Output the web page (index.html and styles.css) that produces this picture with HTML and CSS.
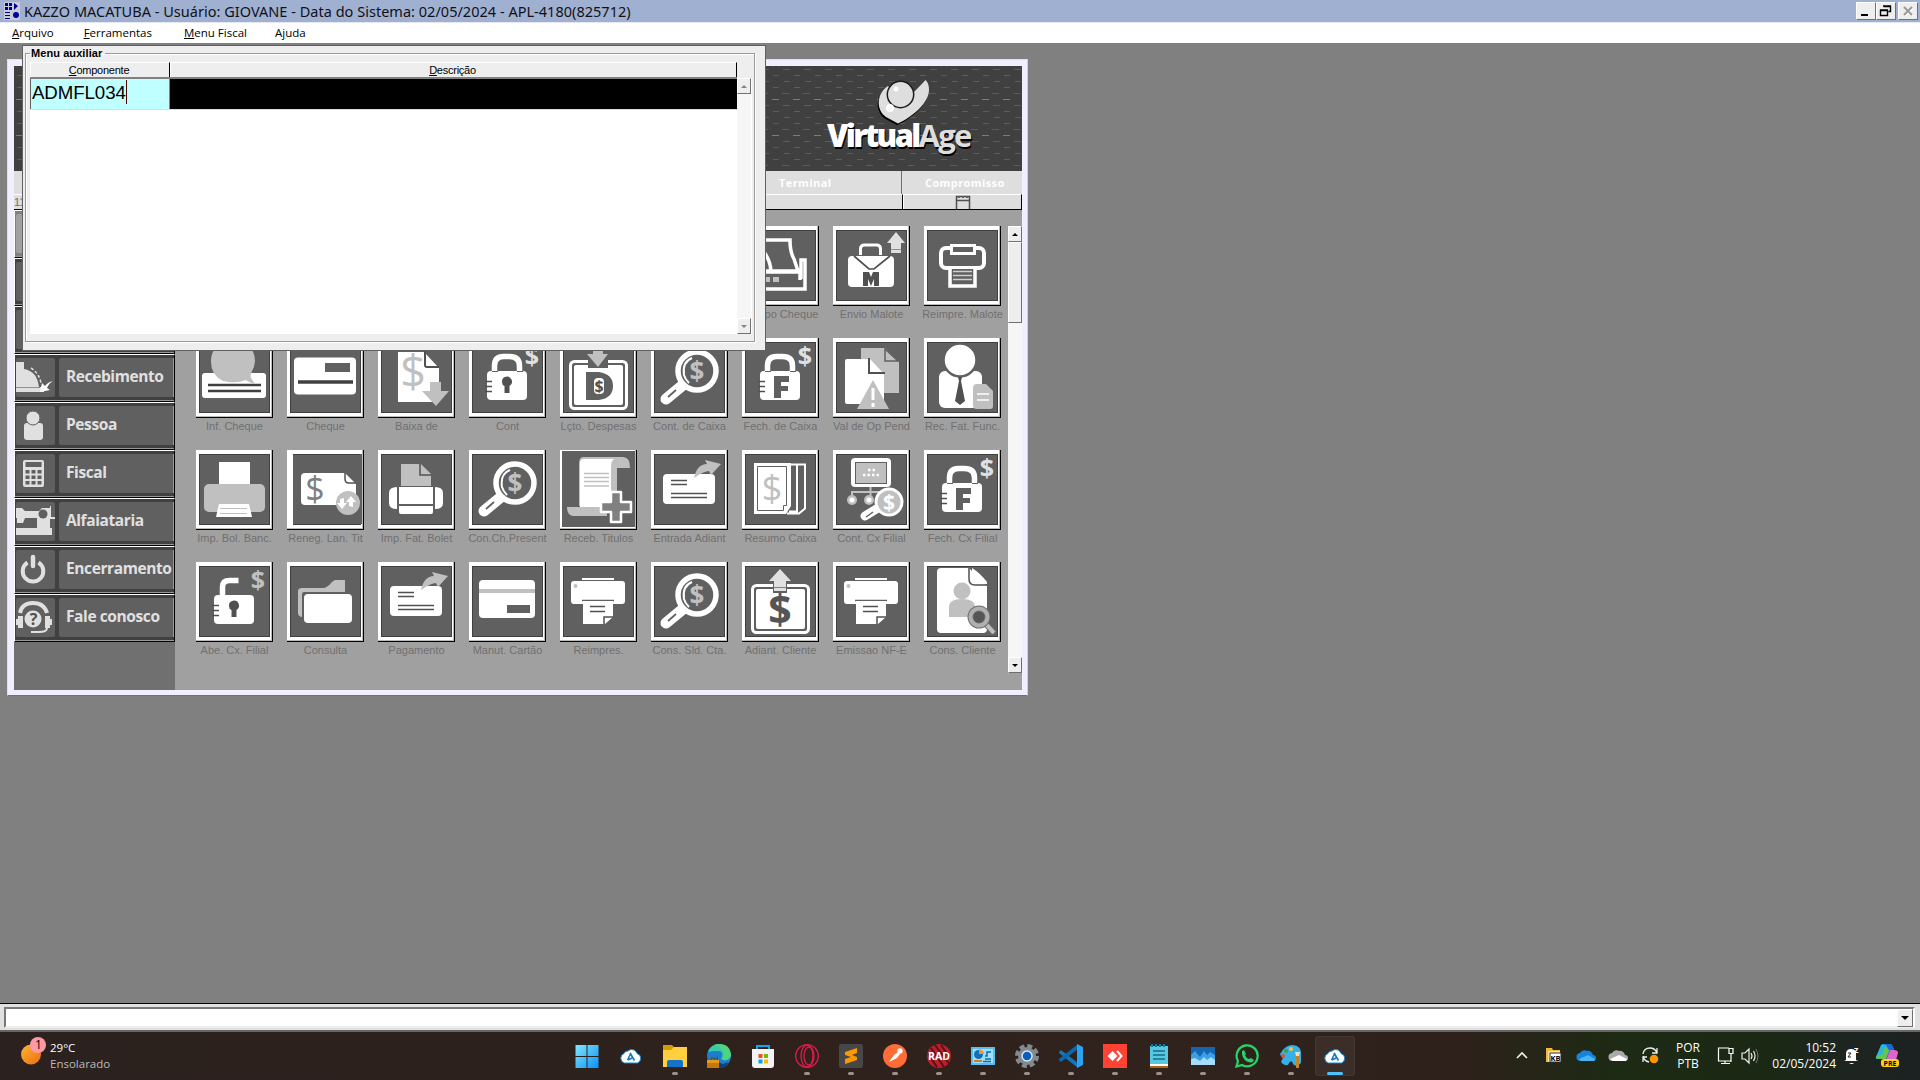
FILE: index.html
```html
<!DOCTYPE html>
<html lang="pt-BR">
<head>
<meta charset="utf-8">
<title>KAZZO MACATUBA</title>
<link rel="stylesheet" href="styles.css">
</head>
<body>
<svg class="defs" width="0" height="0" aria-hidden="true">
<defs>
<pattern id="dashes" width="21" height="36" patternUnits="userSpaceOnUse" x="1" y="3">
<path d="M12 .5h7M2 6.500h6M13 12.500h6M2 18.500h6M11 24.500h7" stroke="#5c5c5c"/><path d="M1 30.500h7" stroke="#7c7c7c"/>
</pattern>
<symbol id="info" viewBox="0 0 77 80"><rect x="6" y="35" width="64" height="25" rx="3" fill="#fff"/><path d="M12 47h53M12 53h53" stroke="#404040" stroke-width="2.500"/><path d="M15 24a22 21 0 1 1 41 9q-2 4-1 7l4 6q-7-2-9-4-10 4-23 1-12-6-12-19z" fill="#c0c0c0"/></symbol>
<symbol id="cheque" viewBox="0 0 77 80"><rect x="7" y="19.500" width="62" height="37" rx="4" fill="#fff"/><rect x="38" y="25" width="25" height="9" fill="#606060"/><path d="M11 44h55" stroke="#404040" stroke-width="3.500"/></symbol>
<symbol id="baixa" viewBox="0 0 77 80"><path d="M20 14h26l15 16v34H20z" fill="#fff"/><path d="M47 13v14q0 2 2 2h12" fill="none" stroke="#505050" stroke-width="2"/><text x="35" y="50" font-size="45" text-anchor="middle" fill="#c0c0c0">$</text><path d="M52 44h11v9h8L58 68 44 53h8z" fill="#c0c0c0"/></symbol>
<symbol id="body" viewBox="0 0 77 80"><rect x="18" y="33" width="40" height="29" rx="4" fill="#fff"/><path d="M16 43.500h7M16 48.500h7M16 53.500h7" stroke="#505050" stroke-width="1.500"/></symbol>
<symbol id="locked" viewBox="0 0 77 80"><use href="#body"/><path d="M25.500 33v-5q0-9.500 9-9.500h6q10 0 10 9.500v5" fill="none" stroke="#fff" stroke-width="5.500"/><path d="M23 33.500h6M48 33.500h6" stroke="#606060"/><text x="63" y="27" font-size="25" font-weight="bold" text-anchor="middle" fill="#e0e0e0">$</text></symbol>
<symbol id="cont" viewBox="0 0 77 80"><use href="#locked"/><path d="M33 44a5 5 0 1 1 7.500 4v7h-5v-7q-2.500-1-2.500-4z" fill="#505050"/></symbol>
<symbol id="fech" viewBox="0 0 77 80"><use href="#locked"/><path d="M32 38h15v6h-8v4h7v5h-7v7h-7z" fill="#606060"/></symbol>
<symbol id="unlock" viewBox="0 0 77 80"><use href="#body"/><path d="M26.500 34V25q0-6.500 7-6.500h9" fill="none" stroke="#fff" stroke-width="5.500"/><path d="M33 44a5 5 0 1 1 7.500 4v7h-5v-7q-2.500-1-2.500-4z" fill="#505050"/><text x="62" y="27" font-size="25" font-weight="bold" text-anchor="middle" fill="#c0c0c0">$</text></symbol>
<symbol id="frame" viewBox="0 0 77 80"><rect x="10.500" y="23.500" width="56" height="47" rx="4" fill="#606060" stroke="#fff" stroke-width="3"/><rect x="14" y="27" width="49" height="40" rx="2" fill="#fff"/></symbol>
<symbol id="desp" viewBox="0 0 77 80"><use href="#frame"/><rect x="28" y="20" width="20" height="10" fill="#606060"/><path d="M33 5h10v11h5L38 29 27 16h6z" fill="#c0c0c0"/><path d="M26 34h13q14 2 14 14T39 62H26z" fill="#606060"/><rect x="34" y="40" width="10" height="16" rx="4" fill="#fff"/><text x="39" y="54" font-size="16" font-weight="bold" text-anchor="middle" fill="#505050">$</text></symbol>
<symbol id="mag" viewBox="0 0 77 80"><path d="M32 47 15 61" stroke="#fff" stroke-width="11" stroke-linecap="round"/><path d="M25 52l-8 7" stroke="#606060" stroke-width="1.700"/><circle cx="46" cy="33" r="19" fill="#606060" stroke="#fff" stroke-width="5.500"/><path d="M41 20q-10 4-8 17 1 4 5 8" fill="none" stroke="#fff" stroke-width="2"/><text x="46" y="42.500" font-size="26" font-weight="bold" text-anchor="middle" fill="#c0c0c0">$</text></symbol>
<symbol id="val" viewBox="0 0 77 80"><path d="M28 10h24l14 14v31H28z" fill="#c0c0c0"/><path d="M52 11v12h13z" fill="#c0c0c0" stroke="#606060" stroke-width="1.500"/><path d="M14 21h23l14 15v30H14q-2 0-2-2V23q0-2 2-2z" fill="#fff"/><path d="M36 20v15h16" fill="none" stroke="#505050" stroke-width="2"/><path d="M40 42l16 29H24z" fill="#c0c0c0"/><path d="M40 50v12M40 65v4" stroke="#fff" stroke-width="3"/></symbol>
<symbol id="func" viewBox="0 0 77 80"><rect x="15" y="33" width="43" height="37" rx="6" fill="#fff"/><circle cx="36" cy="22" r="16.500" fill="#fff" stroke="#606060" stroke-width="2.500"/><path d="M34 39h4l-1 4 4 20-5 4-5-4 4-20z" fill="#505050"/><path d="M49 50q0-4 4-4h9l7 7v15q0 3-3 3H53q-4 0-4-3z" fill="#c0c0c0"/><path d="M53 56h12M53 62h12" stroke="#fff" stroke-width="1.500"/></symbol>
<symbol id="bol" viewBox="0 0 77 80"><rect x="23" y="12" width="31" height="22" fill="#fff"/><rect x="8" y="34" width="61" height="28" rx="5" fill="#c0c0c0"/><path d="M23 54h30l3 13H20z" fill="#fff"/><path d="M24 58.500h27M24 63.500h27" stroke="#c0c0c0"/></symbol>
<symbol id="reneg" viewBox="0 0 77 80"><path d="M3 4h3v71H3z" fill="#fff"/><path d="M73 4h2v70h-2z" fill="#606060"/><path d="M18 23h40l11 11v21H18q-4 0-4-4V27q0-4 4-4z" fill="#fff"/><path d="M58 23v6q0 4 4 4h7" fill="none" stroke="#505050" stroke-width="1.500"/><text x="28" y="51" font-size="34" text-anchor="middle" fill="#808080">$</text><circle cx="61" cy="53" r="12" fill="#c0c0c0"/><path d="M57 48v5h3l-5 6-5-6h3v-4zM66 57v-5h3l-5-6-5 6h3v4z" fill="#fff"/></symbol>
<symbol id="fat" viewBox="0 0 77 80"><path d="M23 14h20l10 10v12H23z" fill="#c0c0c0"/><path d="M42 14v11h11" fill="none" stroke="#505050" stroke-width="1.500"/><rect x="21" y="37" width="34" height="17" fill="#fff"/><path d="M21 56h34v6q0 2-2 2H23q-2 0-2-2zM19 37v22q-8 0-8-6V43q0-6 8-6zM57 37v22q8 0 8-6V43q0-6-8-6z" fill="#fff"/></symbol>
<symbol id="receb" viewBox="0 0 77 80"><path d="M2 1h73v76H2z" fill="#606060"/><path d="M23 7h40q7 0 7 11H57v38H19V14q0-7 4-7zM7 57h40v9H13q-6-1-6-9z" fill="#c0c0c0"/><path d="M20 13q0-4 4-4h30q-3 2-3 8v40H20z" fill="#fff"/><path d="M24 23.500h25M24 27.500h25M24 31.500h25M24 36h25" stroke="#c0c0c0" stroke-width="1.500"/><path d="M51 42h10v10h10v10H61v10H51V62H41V52h10z" fill="#808080" stroke="#fff" stroke-width="2.500" stroke-linejoin="round"/></symbol>
<symbol id="send" viewBox="0 0 77 80"><rect x="12" y="24" width="52" height="30" rx="4" fill="#fff"/><path d="M20 30.500h16M20 34.500h16M20 43.500h36M20 47.500h36" stroke="#505050" stroke-width="1.500"/><path d="M43 28q3-14 13-14l-2-4 16 4-10 11-2-4q-5 0-15 7z" fill="#c0c0c0"/></symbol>
<symbol id="resumo" viewBox="0 0 77 80"><path d="M47 14.500h8v47h-8M55 14.500h8v44l-6 5H45" fill="#606060" stroke="#fff" stroke-width="2"/><path d="M12 13h37v43l-5 8H12z" fill="#fff"/><path d="M15.500 16.500h29v39h-3v5h-26z" fill="none" stroke="#606060"/><text x="30" y="51" font-size="36" text-anchor="middle" fill="#c0c0c0">$</text></symbol>
<symbol id="filial" viewBox="0 0 77 80"><rect x="18" y="8" width="40" height="29" rx="4" fill="#fff"/><rect x="22.500" y="12.500" width="31" height="21" fill="#c0c0c0" stroke="#606060"/><path d="M35 20h8M30 25h17" stroke="#fff" stroke-width="2.500" stroke-dasharray="2.500 2"/><path d="M37.500 37v9M19 47v-5h36" fill="none" stroke="#c0c0c0" stroke-width="2"/><circle cx="19" cy="50" r="5" fill="#c0c0c0"/><circle cx="36" cy="50" r="5" fill="#c0c0c0"/><circle cx="19" cy="50" r="2.500" fill="#fff"/><circle cx="36" cy="50" r="2.500" fill="#fff"/><path d="M45 58L32 66" stroke="#fff" stroke-width="9" stroke-linecap="round"/><path d="M40 62l-7 5" stroke="#606060" stroke-width="1.500"/><circle cx="56" cy="52" r="13" fill="#c0c0c0" stroke="#fff" stroke-width="3"/><text x="56" y="60" font-size="21" font-weight="bold" text-anchor="middle" fill="#fff">$</text></symbol>
<symbol id="folder" viewBox="0 0 77 80"><path d="M11 29q0-3 4-3h21q4 0 9-6l3-2h10v12H17q-2 0-2 3v22q-4-1-4-4z" fill="#c0c0c0"/><rect x="17" y="32" width="48" height="29" rx="4" fill="#fff"/></symbol>
<symbol id="cartao" viewBox="0 0 77 80"><rect x="10" y="18" width="56" height="38" rx="4" fill="#fff"/><path d="M10 27h56v4H10z" fill="#c0c0c0"/><path d="M38 43h23v8H38z" fill="#606060"/></symbol>
<symbol id="print" viewBox="0 0 77 80"><path d="M22 16h32v2H22z" fill="#fff"/><rect x="11" y="19" width="54" height="23" rx="3" fill="#fff"/><circle cx="15.500" cy="24" r="2" fill="#c0c0c0"/><path d="M22 38.500h32" stroke="#606060" stroke-width="1.500"/><path d="M23 39h30v16l-8 7H23z" fill="#fff"/><path d="M44 62v-7h9" fill="none" stroke="#505050" stroke-width="1.500"/><path d="M30 44.500h15M30 49.500h15" stroke="#505050" stroke-width="1.500"/></symbol>
<symbol id="adiant" viewBox="0 0 77 80"><use href="#frame"/><path d="M31 20h14v11H31z" fill="#606060"/><path d="M38 7l11 12h-5v10H32V19h-5z" fill="#e0e0e0"/><path d="M32 25.500h12" stroke="#808080"/><text x="38" y="62" font-size="41" font-weight="bold" text-anchor="middle" fill="#555">$</text></symbol>
<symbol id="cliente" viewBox="0 0 77 80"><path d="M17 6h28l18 18v43q0 4-4 4H17q-4 0-4-4V10q0-4 4-4z" fill="#fff"/><path d="M45 6v11q0 6 6 6h12" fill="none" stroke="#505050" stroke-width="1.500"/><path d="M48 6q8 5 15 14v2H52q-4 0-4-5z" fill="#fff"/><circle cx="38" cy="29" r="8.500" fill="#c0c0c0"/><path d="M25 55V45q0-8 13-8t13 8v10z" fill="#c0c0c0"/><path d="M61 61l9 10" stroke="#707070" stroke-width="6"/><path d="M61 61l9 10" stroke="#c0c0c0" stroke-width="4"/><circle cx="55" cy="55" r="8.500" fill="#555" stroke="#707070" stroke-width="6"/><circle cx="55" cy="55" r="8.500" fill="none" stroke="#b0b0b0" stroke-width="4"/></symbol>
<symbol id="tipo" viewBox="0 0 77 80"><path d="M20 14h28q0 12 4 19l4 12H20M29 45q-1-12-8-20M20 46h38v8M20 63h43V34h-4v19" fill="none" stroke="#fff" stroke-width="3.500"/><path d="M24 51h4v5h-4zM31 51h6v5h-6z" fill="#c0c0c0"/></symbol>
<symbol id="malote" viewBox="0 0 77 80"><rect x="15" y="30" width="46" height="31" rx="4" fill="#fff"/><path d="M27.500 29v-6q0-4 4-4h12q4 0 4 4v6" fill="none" stroke="#fff" stroke-width="3"/><path d="M21 30l15 13h5l16-13" fill="none" stroke="#505050" stroke-width="1.700"/><path d="M30 46h6l2 5 2-5h6v14h-5v-7l-3 7-3-7v7h-5z" fill="#505050"/><path d="M63 6l9 11h-4v10H58V17h-4z" fill="#e0e0e0"/><path d="M58 23.500h10" stroke="#909090"/></symbol>
<symbol id="reimp" viewBox="0 0 77 80"><rect x="17" y="22" width="43" height="20" rx="5" fill="none" stroke="#fff" stroke-width="4"/><rect x="27.500" y="19.500" width="23" height="8" fill="#606060" stroke="#fff" stroke-width="3"/><path d="M26 43v17h25V43" fill="#606060" stroke="#fff" stroke-width="3.500"/><path d="M29 45.500h19M29 49.500h19M29 53.500h19" stroke="#d0d0d0" stroke-width="1.300"/></symbol>
<symbol id="cloud" viewBox="0 0 24 24"><path d="M5.500 19a5 5 0 0 1-.5-9.500 4 4 0 0 1 4-2.500 5.500 5.500 0 0 1 9 2.500 5 5 0 0 1 .5 9.500z" fill="#fff" stroke="#1485c8" stroke-width="1"/><path d="M12 9l-3.500 7M11 9l4.500 7.500M9 16l4-2" fill="none" stroke="#1277bd" stroke-width="1.600"/></symbol>
</defs>
</svg>

<header class="titlebar">
<svg class="appicon" width="16" height="18" viewBox="0 0 16 18"><path d="M0 0h16v18H0z" fill="#c7cbd8"/><path d="M1 1h3v3H1zM5 1h3v3H5zM1 5h3v3H1zM5 5h3v3H5zM10 1l4 3-4 4zM1 10h5v1H1zM1 13h5v1H1zM1 16h5v1H1z" fill="#000098"/><circle cx="12" cy="13" r="3" fill="#000098"/></svg>
<h1>KAZZO MACATUBA - Usuário: GIOVANE - Data do Sistema: 02/05/2024 - APL-4180(825712)</h1>
<div class="winbtns">
<button><svg width="19" height="16"><path d="M4 11h7v2H4z"/></svg></button><button><svg width="19" height="16"><path d="M6.500 3.500h7v5h-2M6 3h8M3.500 7.500h7v5h-7zM3 7h8" fill="none" stroke="#000" stroke-width="1.400"/></svg></button><button class="close"><svg width="19" height="16"><path d="M6 5l8 8M14 5l-8 8" stroke="#fff" stroke-width="2"/><path d="M5 4l8 8M13 4l-8 8" stroke="#999" stroke-width="2"/></svg></button>
</div>
</header>
<nav class="menubar"><a><u>A</u>rquivo</a><a><u>F</u>erramentas</a><a><u>M</u>enu Fiscal</a><a>A<u>j</u>uda</a></nav>

<main class="workspace">
<section class="child">
<div class="banner"><svg width="1008" height="105"><path d="M0 0h1008v105H0z" fill="#404040"/><path d="M0 0h1008v105H0z" fill="url(#dashes)"/>
<path d="M874 20C862 28 862 44 872 51L884 57.500C900 50 915 36 915 24Q915 17 911.500 14Q906 20 900 26L886 34Z" fill="#000" transform="translate(-1 1.800)"/>
<path d="M874 20C862 28 862 44 872 51L884 57.500C900 50 915 36 915 24Q915 17 911.500 14Q906 20 900 26L886 34Z" fill="#dedede"/><circle cx="886.500" cy="28.500" r="13.200" fill="#dedede" stroke="#1c1c1c" stroke-width="1.500"/><circle cx="882" cy="23" r="2.500" fill="#fff"/><circle cx="876" cy="42" r="4" fill="#fff"/></svg>
<div class="brand"><b>Virtual</b><i>Age</i></div></div>
<div class="heads"><span class="term">Terminal</span><span class="comp">Compromisso</span></div>
<div class="subheads"><span class="term">11</span><span class="comp"><svg width="16" height="14"><path d="M1.500 14V1.500h13V14M1 5.500h14" fill="none" stroke="#505050" stroke-width="1.500"/><path d="M3 1h2v2H3zM7 1h2v2H7zM11 1h2v2h-2z" fill="#606060"/></svg></span></div>
<div class="mainarea">
<aside class="side">
<div class="item active"><span class="ico"></span><span class="lbl"></span></div>
<div class="item"><span class="ico"></span><span class="lbl"></span></div>
<div class="item"><span class="ico"></span><span class="lbl"></span></div>
<div class="item"><span class="ico"><svg width="39" height="38"><path d="M0 4h8v7q13 2 15 18h5v5H0z" fill="#e0e0e0"/><path d="M0 29.500h24" stroke="#909090"/><path d="M15 10q8 5 10 15" fill="none" stroke="#e0e0e0" stroke-width="1.500" stroke-dasharray="3 2"/><path d="M24 34l2-9 3 3q3-4 8-5-4 2-6 7l3 2z" fill="#fff"/></svg></span><span class="lbl">Recebimento</span></div>
<div class="item"><span class="ico"><svg width="39" height="38"><rect x="8" y="17" width="19" height="17" rx="3" fill="#e0e0e0"/><circle cx="17" cy="12" r="7" fill="#e0e0e0" stroke="#606060"/></svg></span><span class="lbl">Pessoa</span></div>
<div class="item"><span class="ico"><svg width="39" height="38"><rect x="7" y="6" width="21" height="27" rx="2" fill="#e0e0e0"/><path d="M9.500 8h16v5h-16zM9.500 16h4v3.500h-4zM15.500 16h4v3.500h-4zM21.500 16h4v3.500h-4zM9.500 21.500h4V25h-4zM15.500 21.500h4V25h-4zM21.500 21.500h4V25h-4zM9.500 27h4v3.500h-4zM15.500 27h4v3.500h-4zM21.500 27h4v3.500h-4z" fill="#606060"/></svg></span><span class="lbl">Fiscal</span></div>
<div class="item"><span class="ico"><svg width="39" height="38"><path d="M0 6h6l3 3h14l3-3h8V4h1v11h4v2h-5v9H21V16H9l-2 5H1v-5H0zM0 26h36v7H0z" fill="#e0e0e0"/><circle cx="27" cy="12" r="4.500" fill="#606060"/></svg></span><span class="lbl">Alfaiataria</span></div>
<div class="item"><span class="ico"><svg width="39" height="38"><path d="M11.500 12.500a10.300 10.300 0 1 0 11 0" fill="none" stroke="#e0e0e0" stroke-width="4"/><path d="M17 7v9" stroke="#e0e0e0" stroke-width="4.500" stroke-linecap="round"/></svg></span><span class="lbl">Encerramento</span></div>
<div class="item"><span class="ico"><svg width="39" height="38"><path d="M4 15q2-10 13-10t14 10" fill="none" stroke="#e0e0e0" stroke-width="4"/><circle cx="17" cy="21" r="8.500" fill="#e0e0e0"/><path d="M2 18h5v12H2zM29 18h5v12h-5zM0 21h3v6H0zM33 21h3v6h-3z" fill="#e0e0e0"/><path d="M31 30q0 4-8 4h-8" fill="none" stroke="#e0e0e0" stroke-width="2"/><text x="17.500" y="27" font-size="16" font-weight="bold" text-anchor="middle" fill="#505050">?</text></svg></span><span class="lbl">Fale conosco</span></div>
</aside>
<div class="tiles">
<figure class="first"><svg><use href="#tipo"/></svg><figcaption class="cut">po Cheque</figcaption></figure>
<figure><svg><use href="#malote"/></svg><figcaption>Envio Malote</figcaption></figure>
<figure><svg><use href="#reimp"/></svg><figcaption>Reimpre. Malote</figcaption></figure>
<figure><svg><use href="#info"/></svg><figcaption>Inf. Cheque</figcaption></figure>
<figure><svg><use href="#cheque"/></svg><figcaption>Cheque</figcaption></figure>
<figure><svg><use href="#baixa"/></svg><figcaption>Baixa de</figcaption></figure>
<figure><svg><use href="#cont"/></svg><figcaption>Cont</figcaption></figure>
<figure><svg><use href="#desp"/></svg><figcaption>Lçto. Despesas</figcaption></figure>
<figure><svg><use href="#mag"/></svg><figcaption>Cont. de Caixa</figcaption></figure>
<figure><svg><use href="#fech"/></svg><figcaption>Fech. de Caixa</figcaption></figure>
<figure><svg><use href="#val"/></svg><figcaption>Val de Op Pend</figcaption></figure>
<figure><svg><use href="#func"/></svg><figcaption>Rec. Fat. Func.</figcaption></figure>
<figure><svg><use href="#bol"/></svg><figcaption>Imp. Bol. Banc.</figcaption></figure>
<figure><svg><use href="#reneg"/></svg><figcaption>Reneg. Lan. Tit</figcaption></figure>
<figure><svg><use href="#fat"/></svg><figcaption>Imp. Fat. Bolet</figcaption></figure>
<figure><svg><use href="#mag"/></svg><figcaption>Con.Ch.Present</figcaption></figure>
<figure><svg><use href="#receb"/></svg><figcaption>Receb. Titulos</figcaption></figure>
<figure><svg><use href="#send"/></svg><figcaption>Entrada Adiant</figcaption></figure>
<figure><svg><use href="#resumo"/></svg><figcaption>Resumo Caixa</figcaption></figure>
<figure><svg><use href="#filial"/></svg><figcaption>Cont. Cx Filial</figcaption></figure>
<figure><svg><use href="#fech"/></svg><figcaption>Fech. Cx Filial</figcaption></figure>
<figure><svg><use href="#unlock"/></svg><figcaption>Abe. Cx. Filial</figcaption></figure>
<figure><svg><use href="#folder"/></svg><figcaption>Consulta</figcaption></figure>
<figure><svg><use href="#send"/></svg><figcaption>Pagamento</figcaption></figure>
<figure><svg><use href="#cartao"/></svg><figcaption>Manut. Cartão</figcaption></figure>
<figure><svg><use href="#print"/></svg><figcaption>Reimpres.</figcaption></figure>
<figure><svg><use href="#mag"/></svg><figcaption>Cons. Sld. Cta.</figcaption></figure>
<figure><svg><use href="#adiant"/></svg><figcaption>Adiant. Cliente</figcaption></figure>
<figure><svg><use href="#print"/></svg><figcaption>Emissao NF-E</figcaption></figure>
<figure><svg><use href="#cliente"/></svg><figcaption>Cons. Cliente</figcaption></figure>
</div>
<div class="scroll big"><span class="sb up"></span><span class="thumb"></span><span class="sb down"></span></div>
</div>
</section>

<section class="dialog">
<fieldset><legend>Menu auxiliar</legend>
<div class="table">
<div class="cols"><span class="c1"><u>C</u>omponente</span><span class="c2"><u>D</u>escrição</span></div>
<div class="grid"><div class="rows"><div class="row"><span class="cell">ADMFL034</span><span class="rest"></span></div></div>
<div class="scroll"><span class="sb up"></span><span class="sb down"></span></div></div>
</div>
</fieldset>
</section>
</main>

<div class="command"><div class="field"><span class="sb down"></span></div></div>

<footer class="taskbar">
<div class="weather"><svg width="28" height="30"><defs><linearGradient id="sun" x2="1" y2="1"><stop stop-color="#f8b83a"/><stop offset="1" stop-color="#f06a08"/></linearGradient></defs><circle cx="11" cy="18.500" r="10" fill="url(#sun)"/><circle cx="18" cy="9" r="8" fill="#ff99a4"/><text x="18.500" y="13" font-size="12" text-anchor="middle">1</text></svg><p>29°C<br><span>Ensolarado</span></p></div>
<div class="apps">
<span><svg viewBox="0 0 24 24"><defs><linearGradient id="win" x2="1" y2="1"><stop stop-color="#7fe8ff"/><stop offset="1" stop-color="#0d8ff5"/></linearGradient></defs><path d="M.5 1h11v11H.500zM12.500 1h11v11h-11zM.5 13h11v11H.500zM12.500 13h11v11h-11z" fill="url(#win)"/></svg></span>
<span><svg viewBox="0 0 24 24"><use href="#cloud"/></svg></span>
<span class="run"><svg viewBox="0 0 24 24"><path d="M0 1h9l2 2v5H0z" fill="#d69a05"/><path d="M0 6h8l3-3h13v20H0z" fill="#ffcf3f"/><path d="M4 23v-5q0-2 2-2h12q2 0 2 2v5z" fill="#1273c9"/></svg></span>
<span><svg viewBox="0 0 24 24"><circle cx="12" cy="12" r="12" fill="#1b7fd0"/><path d="M1 8Q4 0 12 0q11 0 12 11-1 6-8 5-3-1-1-3 2-7-5-6-6 0-9 1z" fill="#3bc9a8"/><path d="M12 0q11 0 12 11-1 6-8 5l1-4Q18 4 7 1z" fill="#5fd866" opacity=".6"/><path d="M10 11q-2 7 6 9l6-2q-4 6-10 6z" fill="#123f75"/><path d="M0 16h12v8H0z" fill="#c77708"/><path d="M0 16h12v3H0z" fill="#e39720"/><path d="M4 16v-2h4v2" stroke="#754000" fill="none"/></svg></span>
<span><svg viewBox="0 0 24 24"><path d="M6 6V2h12v4" fill="none" stroke="#1aa3e8" stroke-width="2"/><path d="M1 5h22v16q0 3-3 3H4q-3 0-3-3z" fill="#f3f3f3"/><path d="M7.500 10h4v4h-4z" fill="#f05022"/><path d="M13 10h4v4h-4z" fill="#7db900"/><path d="M7.500 15.500h4v4h-4z" fill="#00a1ee"/><path d="M13 15.500h4v4h-4z" fill="#fdb800"/></svg></span>
<span class="run"><svg viewBox="0 0 24 24"><g fill="none" stroke="#e01b4c" stroke-width="1.300"><circle cx="12" cy="12" r="11.300"/><ellipse cx="12" cy="12" rx="6" ry="11"/><ellipse cx="14" cy="12" rx="5" ry="9"/></g></svg></span>
<span class="run"><svg viewBox="0 0 24 24"><rect width="24" height="24" rx="2" fill="#474747"/><path d="M6 8l12-4v5l-5 2 5 2v3L6 20v-5l6-2-6-2z" fill="#ff9800"/></svg></span>
<span class="run"><svg viewBox="0 0 24 24"><circle cx="12" cy="12" r="12" fill="#ff6c37"/><path d="M6 18l5-7 4-3 2 2-3 4z" fill="#fff"/><circle cx="17" cy="7" r="2.700" fill="#fff"/></svg></span>
<span class="run"><svg viewBox="0 0 24 24"><circle cx="12" cy="12" r="12" fill="#b8202b"/><path d="M4 4l13 19M8 1l15 20M14 1l9 13M1 10l9 13" stroke="#5b1015" stroke-width="2"/><text x="12" y="16" text-anchor="middle" font-size="10.500" font-weight="bold" fill="#fff">RAD</text></svg></span>
<span class="run"><svg viewBox="0 0 24 24"><path d="M0 3h24v18H0z" fill="#58bdf0"/><path d="M2 5h20v14H2z" fill="#9fe0fa"/><circle cx="7.500" cy="10.500" r="4.500" fill="#136fb8"/><path d="M8 10V5q5 1 5 5z" fill="#f5942a"/><path d="M3 17h8" stroke="#d87b18" stroke-width="2"/><path d="M14 12h2V8h4M14 15h6M12 17.500h8" fill="none" stroke="#116aad" stroke-width="1.500"/></svg></span>
<span class="run"><svg viewBox="0 0 24 24"><circle cx="12" cy="12" r="9" fill="#818991"/><circle cx="12" cy="12" r="10" fill="none" stroke="#818991" stroke-width="4" stroke-dasharray="5 2.850"/><circle cx="12" cy="12" r="5" fill="#0d5eb8" stroke="#d7e7f5" stroke-width="1.500"/></svg></span>
<span class="run"><svg viewBox="0 0 24 24"><path d="M0 8l2-2 17 13v5L0 9z" fill="#1177bd"/><path d="M0 16l2 2L19 5V0L0 15z" fill="#0b68ab"/><path d="M18 0l6 3v18l-6 3z" fill="#2ba3f1"/></svg></span>
<span class="run"><svg viewBox="0 0 24 24"><path d="M0 0h24v24H0z" fill="#ff4234"/><path d="M9.500 7l5 5-5 5-5-5z" fill="#fff"/><path d="M14 7l4.500 5-4.500 5" fill="none" stroke="#fff" stroke-width="2"/></svg></span>
<span class="run"><svg viewBox="0 0 24 24"><path d="M3 2h18v19H3z" fill="#58c8e0"/><path d="M3 20h18v2H3z" fill="#fff"/><path d="M3 22h18v2H3z" fill="#b06314"/><path d="M6 7h12M6 11h12M6 15h12" stroke="#14698a" stroke-width="1.500"/><path d="M5 0v3M9 0v3M13 0v3M17 0v3" stroke="#127aa0" stroke-width="2"/></svg></span>
<span class="run"><svg viewBox="0 0 24 24"><path d="M0 3h24v18H0z" fill="#1565b0"/><path d="M0 11l4-4 5 6 4-6 3 4 3-3 5 3v10H0z" fill="#39a0e8"/><path d="M0 15l4-1 5 3 4-4 3 3 4-3 4 3v5H0z" fill="#a8dcfa"/></svg></span>
<span class="run"><svg viewBox="0 0 24 24"><path d="M1.500 22.500L3 17a10.500 10.500 0 1 1 4 4z" fill="none" stroke="#25d366" stroke-width="2.300"/><path d="M7 7l2-1 2 4-1 1q1 3 4 4l2-1 3 2q-1 3-4 2.500Q8 17 7 10z" fill="#25d366"/></svg></span>
<span class="run"><svg viewBox="0 0 24 24"><path d="M2 9Q6 1 14 1q9 1 8 10v8q-5 5-8 1-1-5-4-1-1 4-6 1-3-2-1-4 2-4 0-4-3 0-1-4z" fill="#35b1e9"/><circle cx="7" cy="7" r="2" fill="#3ba233"/><circle cx="12" cy="5" r="2" fill="#f7c530"/><circle cx="4" cy="12" r="2" fill="#e1502a"/><path d="M16 8h5l-1 4v12h-3V12z" fill="#c78325"/><path d="M16 8h5l-1 4h-3z" fill="#f1dfb6"/></svg></span>
<span class="run current"><svg viewBox="0 0 24 24"><use href="#cloud"/></svg></span>
</div>
<div class="tray">
<svg class="strip" width="150" height="32"><path d="M1 18l5-5 5 5" fill="none" stroke="#eee" stroke-width="1.700"/>
<path d="M30 8h6l1 2h7v12H30z" fill="#f0b83c"/><path d="M32 11h12v11H32z" fill="#fbe19a"/><path d="M34 13h11v9H34z" fill="#fff" stroke="#333"/><text x="39.500" y="20.500" font-size="7.500" font-weight="bold" text-anchor="middle">KB</text>
<path d="M65 21a4 4 0 0 1-1-8 5 5 0 0 1 7-2 5 5 0 0 1 6 4 3 3 0 0 1 0 6z" fill="#1583dc"/><path d="M63 19l9-4 7 4-1 2H65z" fill="#49b4f5"/>
<path d="M97 21a4 4 0 0 1-1-8 5 5 0 0 1 7-2 5 5 0 0 1 6 4 3 3 0 0 1 0 6z" fill="#aaa"/><path d="M94 19l9-4 8 4-1 2H97z" fill="#fff"/>
<path d="M127 14q1-6 7-6 5 0 7 5M141 8v5h-5M133 22q-5-1-6-6M127 22v-5h4" fill="none" stroke="#eee" stroke-width="1.300"/><circle cx="138" cy="19" r="4.300" fill="#ff9500"/></svg>
<div class="lang">POR<br>PTB</div>
<svg class="net" width="42" height="32"><path d="M12 8H1.500v13H14v-8M4 23.500h9M8 21v2M12 8.500h4v5h-4zM14 13v9" fill="none" stroke="#fff" stroke-width="1.200"/><path d="M25 13h3l4-4v14l-4-4h-3zM34 13q2 3 0 6M36.500 11q3 5 0 10" fill="none" stroke="#eee" stroke-width="1.200"/><path d="M39 9q4 7 0 14" fill="none" stroke="#777"/></svg>
<div class="clock">10:52<br>02/05/2024</div>
<svg class="bell" width="16" height="32"><path d="M2 20V14q0-5 5-5 5 0 5 5v6l2 1H0z" fill="#fff"/><path d="M5 23h5q-2 2-5 0" fill="#fff"/><path d="M4 13h3l-3 4h3" stroke="#222" fill="none"/><text x="10" y="13" font-size="9" font-weight="bold" fill="#fff">z</text></svg>
<svg class="copilot" width="26" height="32"><path d="M2 17L7 5q1-1 3-1h6q2 0 3 3l1 3h-4L12 19H4q-3 0-2-2z" fill="#29b8d8"/><path d="M2 16q3-1 6-1l3-8 4 3-3 9H5q-3 0-3-3z" fill="#67c34d"/><path d="M8 4h8q2 0 3 3l1 3h-5L12 5z" fill="#1769d8"/><path d="M16 10h4q4 0 4 3l-2 7H12z" fill="#df66c8"/><rect x="7" y="19" width="18" height="8" rx="3" fill="#ffd11b"/><text x="16" y="25.500" font-size="7" font-weight="bold" text-anchor="middle">PRE</text></svg>
</div>
</footer>
</body>
</html>
```
FILE: styles.css
```css
* { box-sizing: border-box; }
body { margin: 0; width: 1920px; height: 1080px; overflow: hidden; display: flex; flex-direction: column; background: #808080; font-family: "Liberation Sans", Arial, sans-serif; }
.defs { position: absolute; }
svg text { font-family: "Open Sans", sans-serif; }

.titlebar { height: 22px; background: #a0b0d0; display: flex; align-items: center; padding-left: 4px; flex: none; }
.titlebar h1 { margin: 0 0 0 4px; font: 400 14.500px/22px "Noto Sans", sans-serif; color: #101018; white-space: nowrap; letter-spacing: .02px; }
.winbtns { margin-left: auto; display: flex; padding: 0 2px 0 0; }
.winbtns button { width: 20px; height: 18px; padding: 0; background: #eee; border: 1px solid; border-color: #fff #707070 #707070 #fff; display: flex; }
.winbtns .close { margin-left: 2px; }
.menubar { height: 21px; flex: none; background: #fff; border-top: 1px solid #e8e8f0; display: flex; padding-left: 12px; font: 11.500px/20px "Open Sans", sans-serif; color: #000; }
.menubar a { margin-right: 30px; white-space: nowrap; }
.menubar a:nth-child(2) { margin-right: 32px; }
.menubar a:nth-child(3) { margin-right: 28px; }
u { text-underline-offset: 1px; }
.workspace { flex: 1; position: relative; }

.child { position: absolute; left: 7px; top: 16px; width: 1021px; height: 637px; background: #f0eeff; border: 1px solid; border-color: #e0e0e0 #d0d0d0 #707070 #e0e0e0; padding: 6px 5px 5px 6px; display: flex; flex-direction: column; }
.banner { height: 105px; position: relative; flex: none; }
.banner svg { display: block; width: 1008px; }
.brand { position: absolute; left: 813px; top: 47px; font: 700 31px/44px "Open Sans", sans-serif; text-shadow: 1px 2px 0 #000; color: #fff; white-space: nowrap; }
.brand b { font-weight: 800; letter-spacing: -2.700px; }
.brand i { font-style: normal; font-weight: 700; letter-spacing: -1.800px; color: #dedede; }
.heads, .subheads { display: flex; flex: none; background: #dedede; }
.heads { height: 23px; font: 700 11px/23px "Open Sans", sans-serif; letter-spacing: .4px; color: #fff; }
.heads .term { width: 888px; border-right: 1px solid #707070; padding-left: 765px; }
.heads .comp { flex: 1; padding-left: 23px; }
.subheads { height: 16px; border-bottom: 1px solid #000; }
.subheads .term { width: 889px; border-top: 1px solid #fff; border-right: 1px solid #000; font-size: 11px; line-height: 15px; color: #707070; }
.subheads .comp { flex: 1; border: 1px solid #fff; border-right-color: #000; border-bottom: 0; display: flex; justify-content: center; }
.mainarea { flex: 1; display: flex; background: #a0a0a0; }
.side { width: 161px; background: #707070; flex: none; }
.item { height: 48px; display: flex; gap: 4px; padding: 3px 0 4px 1px; background: #404040; border: solid; border-width: 1px; border-color: #fff #000 #000 #fff; box-shadow: inset 0 -1px #999; }
.item.active { background: #808080; }
.item.active span { background: #a0a0a0; }
.ico { width: 39px; background: #606060; border-radius: 2px; overflow: hidden; }
.ico svg { display: block; }
.lbl { flex: 1; background: #606060; border-radius: 2px 0 0 2px; border-right: 1px solid #999; padding-left: 7px; color: #e0e0e0; font: 700 15.500px/37px "Open Sans", sans-serif; letter-spacing: -.4px; white-space: nowrap; }
.tiles { width: 812px; margin: 16px 0 0 21px; display: grid; grid-template-columns: repeat(9, 91px); grid-auto-rows: 112px; flex: none; align-content: start; }
.tiles .first { grid-column: 7; }
figure { margin: 0; width: 77px; }
figure > svg { display: block; width: 77px; height: 80px; background: linear-gradient(#606060, #606060) 4px 5px / 69px 69px no-repeat, linear-gradient(#404040, #404040) 3px 4px / 71px 71px no-repeat, #fff; box-shadow: inset -1px -1px #000, inset -2px -2px #bbb; }
figcaption { font-size: 11px; line-height: 16px; color: #707070; white-space: nowrap; display: flex; justify-content: center; }
figcaption.cut { padding-left: 22px; }
.scroll { width: 14px; background: #f6f6f6; display: flex; flex-direction: column; justify-content: space-between; }
.scroll.big { height: 447px; margin: 16px 0 0; justify-content: flex-start; }
.big .down { margin-top: auto; }
.thumb { height: 81px; background: #eee; border: 1px solid; border-color: #fff #707070 #707070 #fff; }
.sb { height: 16px; width: 14px; flex: none; background: #eee; border: 1px solid; border-color: #fff #707070 #707070 #fff; display: flex; align-items: center; justify-content: center; }
.sb::after { content: ""; border: 3px solid transparent; }
.sb.up::after { border-top: 0; border-bottom-color: #000; }
.sb.down::after { border-bottom: 0; border-top-color: #000; }

.dialog { position: absolute; left: 22px; top: 2px; width: 744px; height: 306px; background: #eee; border: 1px solid #606060; padding: 0 11px 9px 2px; }
fieldset { margin: 0; padding: 0; width: 730px; height: 296px; border: 1px solid #999; box-shadow: 1px 1px #fff, inset 1px 1px #fff; display: flow-root; }
legend { margin-left: 4px; padding: 0 3px 0 1px; font: 700 11px/15px "Liberation Sans", Arial, sans-serif; letter-spacing: .08px; }
.table { margin: 1px 2px 0 4px; }
.cols { display: flex; height: 16px; width: 707px; font: 11px/14px "Liberation Sans", Arial, sans-serif; letter-spacing: -.25px; text-align: center; border-bottom: 1px solid #808080; }
.cols span { border: 1px solid #fff; border-right-color: #000; border-bottom: 0; padding-right: 2px; }
.c1 { width: 140px; }
.c2 { flex: 1; }
.grid { display: flex; height: 256px; background: #fff; }
.rows { width: 707px; }
.row { height: 32px; display: flex; border-top: 1px solid #808080; border-bottom: 1px solid #ddd; }
.cell { width: 140px; background: #c0ffff; border-left: 1px solid #606060; border-right: 1px solid #808080; font-size: 18.700px; line-height: 27px; padding-left: 1px; letter-spacing: -.1px; display: flex; }
.cell::after { content: ""; width: 1px; height: 24px; margin-top: 1px; background: #500; }
.rest { flex: 1; background: #000; }
.dialog .sb::after { opacity: .45; }

.command { height: 29px; flex: none; border-top: 1px solid #000; border-bottom: 2px solid #666; background: #e0e0e0; padding: 3px 5px 3px 4px; }
.field { height: 21px; background: #fff; border: 2px solid; border-color: #777 #fff #eee #777; display: flex; justify-content: flex-end; }
.field .sb { width: 16px; height: 18px; }
.field .sb::after { border-width: 4px 4px 0; }
.taskbar { height: 48px; flex: none; position: relative; display: flex; font: 12px/16px "Open Sans", sans-serif; color: #fff; background: linear-gradient(90deg, #2b211e 0, #30221c 60%, #2e211b 76%, #1d2a14 84%, #1b2914 92%, #1d2520 96%, #1c2121 100%); }
.weather { width: 567px; display: flex; padding: 4px 0 0 20px; }
.weather p { margin: 4px 0 0 2px; font-size: 11.500px; }
.weather p span { color: #bbb; }
.apps { display: flex; gap: 4px; padding-top: 4px; }
.apps > span { width: 40px; height: 40px; padding: 8px; border-radius: 4px; display: flex; flex-direction: column; }
.apps svg { width: 24px; height: 24px; flex: none; }
.run::after { content: ""; align-self: center; width: 6px; height: 3px; border-radius: 2px; margin-top: 4px; background: #9a928f; flex: none; }
.apps .current { background: #3b2e29; box-shadow: inset 0 0 0 1px #443833; }
.current::after { width: 16px; background: #4cc2ff; }
.tray { margin-left: auto; display: flex; align-items: center; padding-right: 20px; }
.lang { width: 36px; text-align: center; margin: 0 11px 0 4px; }
.net { margin-right: 9px; }
.clock { width: 68px; text-align: right; white-space: nowrap; margin-right: 8px; }
.bell { margin-right: 14px; }
```
